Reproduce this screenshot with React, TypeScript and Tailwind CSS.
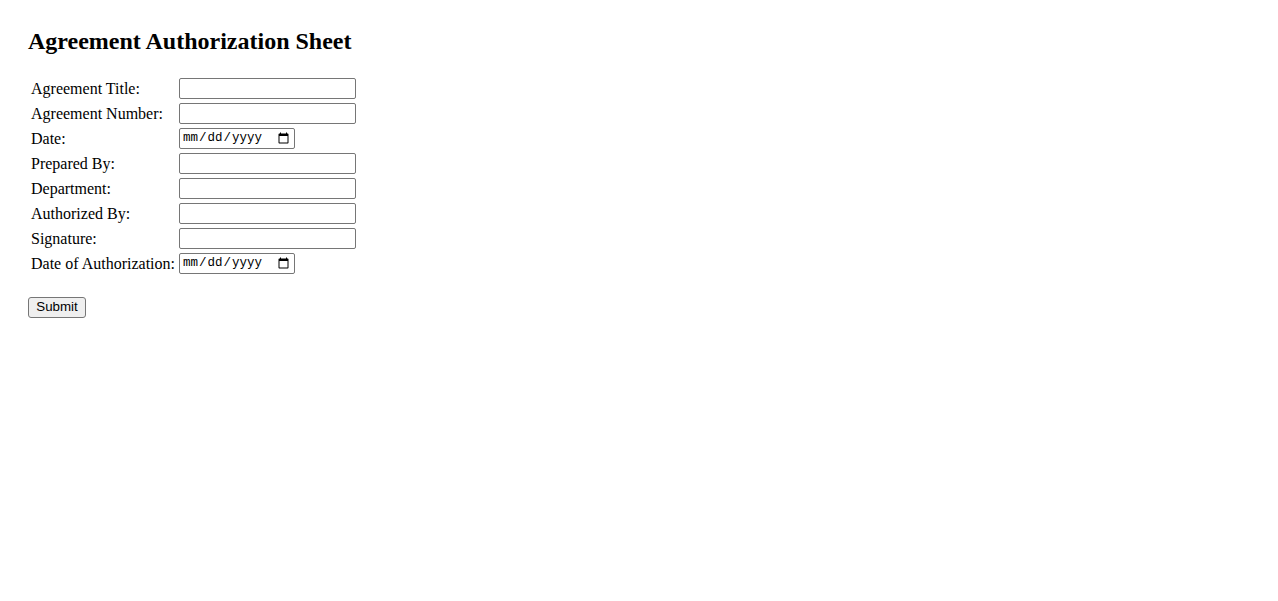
import React from "react";

const fields: { label: string; type: "text" | "date" }[] = [
  { label: "Agreement Title:", type: "text" },
  { label: "Agreement Number:", type: "text" },
  { label: "Date:", type: "date" },
  { label: "Prepared By:", type: "text" },
  { label: "Department:", type: "text" },
  { label: "Authorized By:", type: "text" },
  { label: "Signature:", type: "text" },
  { label: "Date of Authorization:", type: "date" },
];

export default function App() {
  return (
    <div className="min-h-screen bg-white p-7 text-black font-['Liberation_Serif',serif]">
      <h2 className="text-[24px] font-bold leading-[1.15] mb-[19px]">Agreement Authorization Sheet</h2>

      <form onSubmit={(e) => e.preventDefault()}>
        <table className="border-separate border-spacing-[2px] text-[16px] leading-[1.15]">
          <tbody>
            {fields.map((f) => (
              <tr key={f.label}>
                <td className="px-px pt-[2px] pb-0 whitespace-nowrap align-middle">{f.label}</td>
                <td className="p-px align-middle">
                  {f.type === "date" ? (
                    <input
                      type="date"
                      className="block w-[116px] h-[21px] border border-[#767676] rounded-[2px] px-[2px] bg-white text-[12.5px] font-['Liberation_Mono',monospace]"
                    />
                  ) : (
                    <input
                      type="text"
                      className="block w-[177px] h-[21px] border border-[#767676] rounded-[2px] px-[2px] bg-white text-[13.33px] font-['Liberation_Sans',sans-serif]"
                    />
                  )}
                </td>
              </tr>
            ))}
          </tbody>
        </table>

        <button
          type="submit"
          className="mt-5 block w-[58px] h-[21px] border border-[#767676] rounded-[3px] bg-[#efefef] text-[13.33px] leading-none font-['Liberation_Sans',sans-serif]"
        >
          Submit
        </button>
      </form>
    </div>
  );
}
